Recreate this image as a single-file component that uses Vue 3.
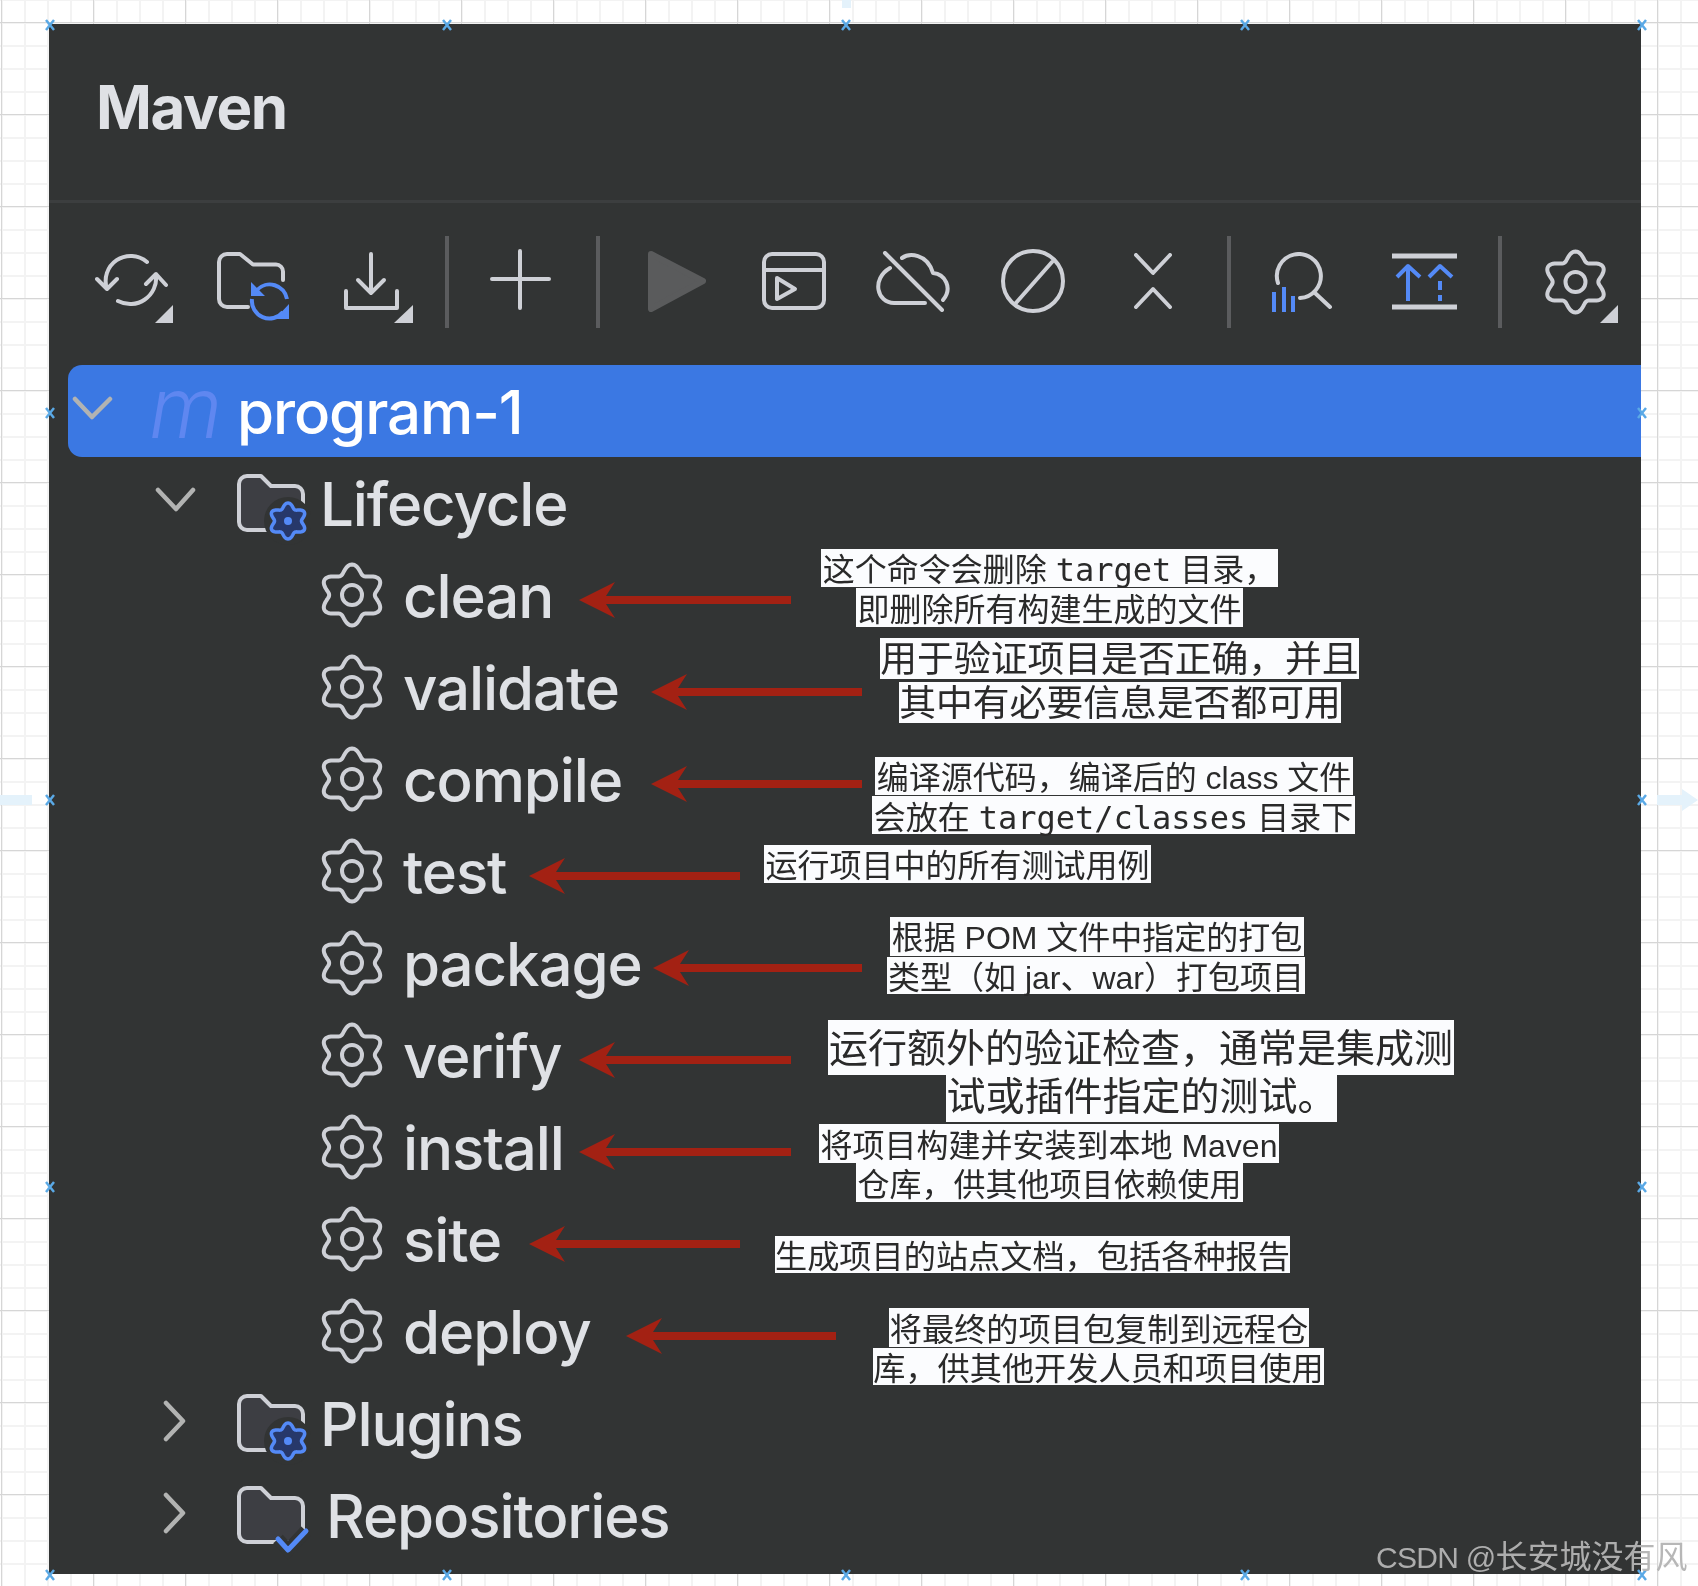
<script setup>
const makeGear = (R) => {
  let d = ''
  for (let i = 0; i <= 144; i++) {
    const t = (i / 144) * Math.PI * 2
    const r = R * (0.86 + 0.14 * Math.cos(6 * t))
    const x = 1.04 * r * Math.sin(t)
    const y = -r * Math.cos(t)
    d += (i ? 'L' : 'M') + x.toFixed(2) + ' ' + y.toFixed(2)
  }
  return d + 'Z'
}
const gearBig = makeGear(30.5)
const gearSmall = makeGear(18)

const tasks = ['clean', 'validate', 'compile', 'test', 'package', 'verify', 'install', 'site', 'deploy']

const arrows = [
  { x1: 579, x2: 791, y: 600 },
  { x1: 651, x2: 862, y: 692 },
  { x1: 651, x2: 862, y: 784 },
  { x1: 529, x2: 740, y: 876 },
  { x1: 653, x2: 862, y: 968 },
  { x1: 579, x2: 791, y: 1060 },
  { x1: 579, x2: 791, y: 1152 },
  { x1: 529, x2: 740, y: 1244 },
  { x1: 626, x2: 836, y: 1336 }
].map((a) => ({
  points: [
    [a.x1, a.y], [a.x1 + 36, a.y - 18], [a.x1 + 27, a.y - 4], [a.x2, a.y - 4],
    [a.x2, a.y + 4], [a.x1 + 27, a.y + 4], [a.x1 + 36, a.y + 18]
  ].join(' ')
}))

const t = (text) => ({ text, code: false })
const c = (text) => ({ text, code: true })
const notes = [
  { x: 821, y: 549, w: 457, h: 38, f: 32, lift: 2, parts: [t('这个命令会删除 '), c('target'), t(' 目录，')] },
  { x: 856, y: 588, w: 387, h: 39, f: 32, lift: 2, parts: [t('即删除所有构建生成的文件')] },
  { x: 880, y: 638, w: 479, h: 41, f: 36.8, lift: 6, parts: [t('用于验证项目是否正确，并且')] },
  { x: 899, y: 682, w: 442, h: 41, f: 36.8, lift: 6, parts: [t('其中有必要信息是否都可用')] },
  { x: 875, y: 757, w: 478, h: 38, f: 32, lift: 2, parts: [t('编译源代码，编译后的 class 文件')] },
  { x: 872, y: 796, w: 483, h: 38, f: 32, lift: 0, parts: [t('会放在 '), c('target/classes'), t(' 目录下')] },
  { x: 764, y: 845, w: 387, h: 38, f: 32, lift: 2, parts: [t('运行项目中的所有测试用例')] },
  { x: 890, y: 917, w: 414, h: 39, f: 32, lift: 3, parts: [t('根据 POM 文件中指定的打包')] },
  { x: 887, y: 957, w: 418, h: 37, f: 32, lift: 2, parts: [t('类型（如 jar、war）打包项目')] },
  { x: 828, y: 1020, w: 626, h: 55, f: 39, lift: 6, parts: [t('运行额外的验证检查，通常是集成测')] },
  { x: 946, y: 1075, w: 391, h: 47, f: 39, lift: 12, parts: [t('试或插件指定的测试。')] },
  { x: 819, y: 1124, w: 460, h: 39, f: 32, lift: 2, parts: [t('将项目构建并安装到本地 Maven')] },
  { x: 856, y: 1163, w: 387, h: 39, f: 32, lift: 2, parts: [t('仓库，供其他项目依赖使用')] },
  { x: 775, y: 1236, w: 515, h: 37, f: 32.2, lift: 2, parts: [t('生成项目的站点文档，包括各种报告')] },
  { x: 889, y: 1308, w: 420, h: 39, f: 32.2, lift: 2, parts: [t('将最终的项目包复制到远程仓')] },
  { x: 873, y: 1348, w: 451, h: 37, f: 32.2, lift: 2, parts: [t('库，供其他开发人员和项目使用')] }
]

const handleXs = [50, 447, 846, 1245, 1642]
const handleYs = [413, 800, 1187]
const handles = [
  ...handleXs.map((x) => ({ x, y: 25 })),
  ...handleXs.map((x) => ({ x, y: 1575 })),
  ...handleYs.map((y) => ({ x: 50, y })),
  ...handleYs.map((y) => ({ x: 1642, y }))
]
</script>

<template>
  <div class="page">
    <div class="panel">
      <header class="head"><h1 class="title">Maven</h1></header>

      <div class="toolbar">
        <svg class="btn soft" viewBox="0 0 120 160">
          <g class="i">
            <path d="M74 58A25 25 0 0 0 34 85M24 75L34 85L44 75M45 97A26 26 0 0 0 83 71M73 80L83 70L93 81" />
          </g>
          <path class="tri" d="M82 119L100 101V119Z" />
        </svg>
        <svg class="btn soft" viewBox="0 0 120 160">
          <path class="i" d="M55 103H34a8 8 0 0 1-8-8V58a8 8 0 0 1 8-8H47L60 60.500H83a7 7 0 0 1 7 7V76" />
          <path class="ib" d="M94 95A17.500 17.500 0 0 0 64 86M59 95A17.500 17.500 0 0 0 90 108" />
          <path class="fb" d="M58 78V92H72ZM96 100V115H82Z" />
        </svg>
        <svg class="btn soft" viewBox="0 0 120 160">
          <path class="i" d="M58 50V89M45 76L58 89L71 76M33 87V104H84V87" />
          <path class="tri" d="M81 119L100 101V119Z" />
        </svg>
        <span class="sep sep-a"></span>
        <svg class="btn soft" viewBox="0 0 120 160">
          <path class="i" d="M32 75H89M60 47V104" />
        </svg>
        <span class="sep sep-b"></span>
        <svg class="btn soft" viewBox="0 0 120 160">
          <path class="run" d="M38 50L90 77L38 105Z" />
        </svg>
        <svg class="btn soft" viewBox="0 0 120 160">
          <rect class="i" x="31" y="50" width="60" height="54" rx="8" />
          <path class="i" d="M31 66H91M44 74L62 85L44 95Z" />
        </svg>
        <svg class="btn soft" viewBox="0 0 120 160">
          <path class="i" d="M32 49L89 106M49 54C56 49 74 49 80 69C92 70 100 84 90 96M72 99H41C24 99 18 75 37 64" />
        </svg>
        <svg class="btn soft" viewBox="0 0 120 160">
          <circle class="i" cx="60" cy="77" r="30" />
          <path class="i" d="M42 100L79 58" />
        </svg>
        <svg class="btn soft" viewBox="0 0 120 160">
          <path class="i" d="M43 51L60 69L77 51M43 103L60 85L77 103" />
        </svg>
        <span class="sep sep-c"></span>
        <svg class="btn soft" viewBox="0 0 120 160">
          <path class="i" d="M38 79A22 22 0 1 1 60 94M75 89L90 103" />
          <path class="ib" d="M34 88V108M44 83V108M53 92V108" />
        </svg>
        <svg class="btn btn-near soft" viewBox="0 0 120 160">
          <path class="bar" d="M28 52H93M28 103H93" />
          <path class="ib" d="M44 62V97M33 73L44 62L56 73M76 77V86M76 91V97M65 73L76 62L88 73" />
        </svg>
        <span class="sep sep-d"></span>
        <svg class="btn soft" viewBox="0 0 120 160">
          <g transform="translate(59.500 78)">
            <path class="i" :d="gearBig" />
            <circle class="i" r="10" />
          </g>
          <path class="tri" d="M84 119L102 101V119Z" />
        </svg>
      </div>

      <div class="tree">
        <div class="row row-sel">
          <svg class="chev soft" viewBox="0 0 60 92"><path class="c" d="M7 34L24 52L42 34" /></svg>
          <span class="maven-m soft">m</span>
          <span class="label label-sel soft">program-1</span>
        </div>

        <div class="row lvl1">
          <svg class="chev soft" viewBox="0 0 60 92"><path class="c" d="M13 33L31 52L48 33" /></svg>
          <svg class="folder soft" viewBox="0 0 80 92">
            <path class="fd" d="M16 19H30L40 29H64a8 8 0 0 1 8 8V65a8 8 0 0 1-8 8H16a8 8 0 0 1-8-8V27a8 8 0 0 1 8-8Z" />
            <circle class="cut" cx="57" cy="64" r="24" />
            <g transform="translate(57 64)">
              <path class="mg" :d="gearSmall" />
              <circle class="md" r="4" />
            </g>
          </svg>
          <span class="label soft">Lifecycle</span>
        </div>

        <div v-for="task in tasks" :key="task" class="row lvl2">
          <svg class="gear soft" viewBox="0 0 80 92">
            <g transform="translate(39 46)">
              <path class="i" :d="gearBig" />
              <circle class="i" r="10" />
            </g>
          </svg>
          <span class="label soft">{{ task }}</span>
        </div>

        <div class="row lvl1">
          <svg class="chev soft" viewBox="0 0 60 92"><path class="c" d="M21 26L38 44L21 62" /></svg>
          <svg class="folder soft" viewBox="0 0 80 92">
            <path class="fd" d="M16 19H30L40 29H64a8 8 0 0 1 8 8V65a8 8 0 0 1-8 8H16a8 8 0 0 1-8-8V27a8 8 0 0 1 8-8Z" />
            <circle class="cut" cx="57" cy="64" r="24" />
            <g transform="translate(57 64)">
              <path class="mg" :d="gearSmall" />
              <circle class="md" r="4" />
            </g>
          </svg>
          <span class="label soft">Plugins</span>
        </div>

        <div class="row lvl1">
          <svg class="chev soft" viewBox="0 0 60 92"><path class="c" d="M21 26L38 44L21 62" /></svg>
          <svg class="folder soft" viewBox="0 0 80 92">
            <path class="fd" d="M16 19H30L40 29H64a8 8 0 0 1 8 8V65a8 8 0 0 1-8 8H16a8 8 0 0 1-8-8V27a8 8 0 0 1 8-8Z" />
            <path class="chk-cut" d="M47 70L57 81L75 62" />
            <path class="chk" d="M47 70L57 81L75 62" />
          </svg>
          <span class="label label-repo soft">Repositories</span>
        </div>
      </div>
    </div>

    <svg class="overlay soft" viewBox="0 0 1698 1586">
      <polygon v-for="(a, i) in arrows" :key="i" class="arrow" :points="a.points" />
    </svg>

    <div
      v-for="(n, i) in notes"
      :key="i"
      class="note"
      :style="{ left: n.x + 'px', top: n.y + 'px', width: n.w + 'px', height: n.h + 'px', fontSize: n.f + 'px', paddingBottom: n.lift + 'px' }"
    >
      <span v-for="(p, j) in n.parts" :key="j" :class="{ code: p.code }">{{ p.text }}</span>
    </div>

    <svg class="overlay" viewBox="0 0 1698 1586">
      <path class="pale" d="M0 795H32V805H0ZM1657 795H1682L1682 789L1698 800L1682 811L1682 805H1657ZM842 0H851V8H842Z" />
      <path
        v-for="(h, i) in handles"
        :key="i"
        class="handle"
        :d="`M${h.x - 4} ${h.y - 5}L${h.x + 4} ${h.y + 5}M${h.x + 4} ${h.y - 5}L${h.x - 4} ${h.y + 5}`"
      />
    </svg>

    <div class="mark"><span class="mark-latin">CSDN @</span>长安城没有风</div>
  </div>
</template>

<style scoped>
.page {
  position: relative;
  width: 1698px;
  height: 1586px;
  box-sizing: border-box;
  padding: 24px 0 0 49px;
  overflow: hidden;
  background-color: #fff;
  background-image:
    linear-gradient(#d6d6d6 1px, transparent 1px),
    linear-gradient(90deg, #d6d6d6 1px, transparent 1px),
    linear-gradient(#f3f3f3 2px, transparent 2px),
    linear-gradient(90deg, #f3f3f3 2px, transparent 2px);
  background-size: 92px 92px, 92px 92px, 23px 23px, 23px 23px;
  background-position: 0 22px, 1px 0, 0 22px, 1px 0;
  font-family: Inter, "Noto Sans CJK SC", sans-serif;
}
.panel {
  width: 1592px;
  height: 1550px;
  background: #323434;
}
.head {
  box-sizing: border-box;
  height: 179px;
  padding: 37px 0 0 47px;
  border-bottom: 3px solid #3c3e3f;
}
.title {
  margin: 0;
  font-size: 60px;
  line-height: 92px;
  font-weight: 700;
  letter-spacing: -1.4px;
  color: #dfe1e5;
  filter: blur(0.7px);
}
.toolbar {
  display: flex;
  align-items: flex-start;
  box-sizing: border-box;
  height: 162px;
  padding: 1px 0 0 24px;
}
.btn {
  flex: none;
  width: 120px;
  height: 160px;
}
.btn-near {
  margin-left: 4px;
}
.sep {
  flex: none;
  width: 4px;
  height: 92px;
  margin-top: 32px;
  background: #5b5c5e;
}
.sep-a { margin-left: 12px; margin-right: 11px; }
.sep-b { margin-left: 16px; margin-right: 13px; }
.sep-c { margin-left: 14px; margin-right: 9px; }
.sep-d { margin-left: 14px; margin-right: 14px; }
.i, .i path {
  fill: none;
  stroke: #ced0d6;
  stroke-width: 4;
  stroke-linecap: round;
  stroke-linejoin: round;
}
.ib {
  fill: none;
  stroke: #548af7;
  stroke-width: 4;
  stroke-linejoin: round;
}
.fb {
  fill: #548af7;
}
.tri {
  fill: #ced0d6;
}
.bar {
  fill: none;
  stroke: #ced0d6;
  stroke-width: 5;
}
.run {
  fill: #5a5b5c;
  stroke: #5a5b5c;
  stroke-width: 6;
  stroke-linejoin: round;
}
.tree {
  display: flex;
  flex-direction: column;
}
.row {
  display: flex;
  align-items: center;
  height: 92px;
  margin-left: 19px;
}
.row-sel {
  background: #3b78e3;
  border-radius: 14px 0 0 14px;
}
.lvl1 {
  padding-left: 77px;
}
.lvl2 {
  padding-left: 245px;
}
.chev {
  flex: none;
  width: 60px;
  height: 92px;
}
.c {
  fill: none;
  stroke: #b2b3b2;
  stroke-width: 4.500;
  stroke-linecap: round;
  stroke-linejoin: round;
}
.folder {
  flex: none;
  width: 80px;
  height: 92px;
  margin-left: 26px;
}
.gear {
  flex: none;
  width: 80px;
  height: 92px;
}
.fd {
  fill: #3d3e43;
  stroke: #ced0d6;
  stroke-width: 4;
  stroke-linejoin: round;
}
.cut {
  fill: #323434;
}
.mg {
  fill: #27386a;
  stroke: #548af7;
  stroke-width: 3.500;
}
.md {
  fill: #548af7;
}
.chk-cut {
  fill: none;
  stroke: #323434;
  stroke-width: 13;
}
.chk {
  fill: none;
  stroke: #548af7;
  stroke-width: 5;
  stroke-linecap: round;
  stroke-linejoin: round;
}
.maven-m {
  flex: none;
  box-sizing: border-box;
  width: 88px;
  margin-left: 21px;
  padding-bottom: 6px;
  font-size: 84px;
  font-weight: 300;
  font-style: italic;
  line-height: 86px;
  color: #5f87f0;
}
.label {
  font-size: 60px;
  font-weight: 500;
  letter-spacing: -1.1px;
  line-height: 92px;
  color: #dfe1e5;
  white-space: nowrap;
  padding-top: 2px;
}
.label-sel {
  color: #fff;
}
.folder + .label {
  margin-left: 9px;
}
.gear + .label {
  margin-left: 10px;
}
.folder + .label-repo {
  margin-left: 15px;
}
.soft {
  filter: blur(0.7px);
}
.overlay {
  position: absolute;
  left: 0;
  top: 0;
  width: 1698px;
  height: 1586px;
  pointer-events: none;
}
.arrow {
  fill: #a32113;
}
.pale {
  fill: #e4f2fb;
}
.handle {
  fill: none;
  stroke: #5aa9e6;
  stroke-width: 2.500;
}
.note {
  position: absolute;
  display: flex;
  box-sizing: border-box;
  align-items: center;
  justify-content: center;
  background: #fbfcfe;
  color: #2a2a2a;
  font-family: "Liberation Sans", "Noto Sans CJK SC", sans-serif;
  white-space: pre;
  filter: blur(0.5px);
}
.code {
  font-family: "DejaVu Sans Mono", monospace;
  padding-top: 6px;
}
.mark {
  position: absolute;
  left: 1376px;
  top: 1537px;
  font-family: "Liberation Sans", "Noto Sans CJK SC", sans-serif;
  font-size: 32px;
  line-height: 40px;
  color: #b4b4b4;
  opacity: 0.95;
  white-space: nowrap;
}
.mark-latin {
  font-size: 30px;
  letter-spacing: -0.7px;
}
</style>
